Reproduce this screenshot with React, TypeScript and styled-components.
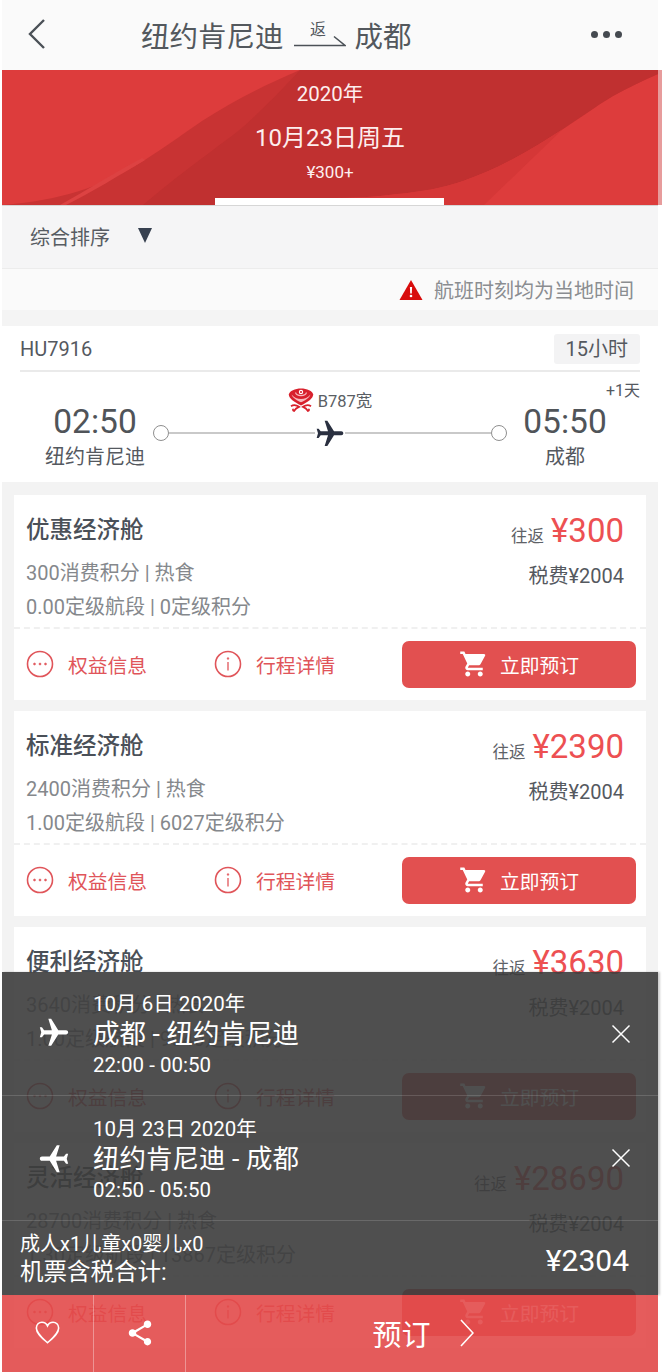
import React from "react";
import styled, { createGlobalStyle } from "styled-components";
import { MdFlight, MdShoppingCart, MdShare } from "react-icons/md";

const GlobalStyle = createGlobalStyle`
  html, body {
    margin: 0;
    padding: 0;
    background: #ffffff;
  }
  body {
    font-family: Roboto, "Noto Sans CJK SC", sans-serif;
  }
`;

const cabins = [
  { name: "优惠经济舱", price: "¥300", points: "300消费积分 | 热食", level: "0.00定级航段 | 0定级积分" },
  { name: "标准经济舱", price: "¥2390", points: "2400消费积分 | 热食", level: "1.00定级航段 | 6027定级积分" },
  { name: "便利经济舱", price: "¥3630", points: "3640消费积分 | 热食", level: "1.00定级航段 | 9040定级积分" },
  { name: "灵活经济舱", price: "¥28690", points: "28700消费积分 | 热食", level: "1.30定级航段 | 13867定级积分" },
];

const trips = [
  { date: "10月 6日 2020年", route: "成都 - 纽约肯尼迪", time: "22:00 - 00:50", back: false },
  { date: "10月 23日 2020年", route: "纽约肯尼迪 - 成都", time: "02:50 - 05:50", back: true },
];

const HainanLogo = () => (
  <svg width="26" height="24" viewBox="0 0 26 24" fill="none">
    <path d="M13 0.500C7 0.500 1.500 3 0.800 6.500C1 10.500 6 14 13 17.500C20 14 25 10.500 25.200 6.500C24.500 3 19 0.500 13 0.500Z" fill="#d8202c" />
    <path d="M3.500 6.500C5 10.500 9.500 12.800 13 14.200C16.500 12.800 21 10.500 22.500 6.500C20 9.800 16.500 11 13 11C9.500 11 6 9.800 3.500 6.500Z" fill="#f7b9bd" />
    <path d="M7.500 4.500C8.500 8.600 17.500 8.600 18.500 4.500" stroke="#f7b9bd" strokeWidth="1.100" />
    <circle cx="13" cy="4" r="2.200" fill="#ffffff" />
    <circle cx="13" cy="4" r="1.100" fill="#d8202c" />
    <path d="M3 18.200C5.500 16.500 8.500 17 11 18.800C8.800 19.600 7.200 21 6 23C5 22.600 4.500 21.500 5.600 21" stroke="#d8202c" strokeWidth="1.800" />
    <path d="M23 18.200C20.500 16.500 17.500 17 15 18.800C17.200 19.600 18.800 21 20 23C21 22.600 21.500 21.500 20.400 21" stroke="#d8202c" strokeWidth="1.800" />
  </svg>
);

const MoreIcon = () => (
  <svg width="28" height="28" viewBox="0 0 28 28" fill="none" stroke="#e0555a" strokeWidth="1.600">
    <circle cx="14" cy="14" r="12.500" />
    <circle cx="8.500" cy="14" r="1" fill="#e0555a" strokeWidth="0.600" />
    <circle cx="14" cy="14" r="1" fill="#e0555a" strokeWidth="0.600" />
    <circle cx="19.500" cy="14" r="1" fill="#e0555a" strokeWidth="0.600" />
  </svg>
);

const InfoIcon = () => (
  <svg width="28" height="28" viewBox="0 0 28 28" fill="none" stroke="#e0555a" strokeWidth="1.600">
    <circle cx="14" cy="14" r="12.500" />
    <circle cx="14" cy="8.500" r="0.900" fill="#e0555a" strokeWidth="0.400" />
    <path d="M14 12V20.500" strokeWidth="1.300" />
  </svg>
);

const App = () => (
  <Page>
    <GlobalStyle />
    <Header>
      <BackButton>
        <svg width="20" height="32" viewBox="0 0 20 32" fill="none" stroke="#4b5157" strokeWidth="2.400">
          <path d="M17 2L3 16L17 30" />
        </svg>
      </BackButton>
      <RouteTitle>
        <span>纽约肯尼迪</span>
        <ReturnMark>
          <ReturnLabel>返</ReturnLabel>
          <ReturnArrow width="52" height="14" viewBox="0 0 52 14" fill="none" stroke="#4b5157" strokeWidth="1.600">
            <path d="M0 12.500H51L40 3.500" />
          </ReturnArrow>
        </ReturnMark>
        <span>成都</span>
      </RouteTitle>
      <MoreDots>
        <Dot />
        <Dot />
        <Dot />
      </MoreDots>
    </Header>

    <DateTab>
      <Swoosh viewBox="0 0 656 135" preserveAspectRatio="none">
        <path d="M0 135C25 133 45 130 67 124C90 118 112 108 133 96C155 83 178 66 200 51C232 30 265 14 298 0H656V4C640 11 625 18 611 26C594 36 578 48 561 59C544 70 528 80 511 89C494 98 478 105 461 111C440 118 418 122 395 124C372 127 350 128 328 128V135Z" fill="#c83333" />
        <path d="M141 135C170 110 200 88 231 65C250 50 275 25 298 0H656V4C640 11 625 18 611 26C594 36 578 48 561 59C544 70 528 80 511 89C494 98 478 105 461 111C440 118 418 122 395 124C372 127 350 128 328 128V135Z" fill="#c03030" />
        <path d="M58 135C85 120 112 103 140 88L143 90C116 106 90 122 64 135Z" fill="#dd4242" />
        <path d="M328 128C350 128 372 127 395 124C418 122 440 118 461 111C478 105 494 98 511 89C528 80 544 70 561 59L482 135H328Z" fill="#d53737" />
      </Swoosh>
      <TabYear>2020年</TabYear>
      <TabDate>10月23日周五</TabDate>
      <TabPrice>¥300+</TabPrice>
      <TabActiveBar />
    </DateTab>

    <SortRow>
      <span>综合排序</span>
      <SortArrow />
    </SortRow>

    <NoticeRow>
      <svg width="24" height="22" viewBox="0 0 24 22">
        <path d="M12 1L23.500 21H0.500Z" fill="#d80c0c" />
        <path d="M10.900 8H13.100L12.800 14.500H11.200Z" fill="#ffffff" />
        <circle cx="12" cy="17" r="1.300" fill="#ffffff" />
      </svg>
      <span>航班时刻均为当地时间</span>
    </NoticeRow>

    <FlightCard>
      <FlightTop>
        <span>HU7916</span>
        <Duration>15小时</Duration>
      </FlightTop>
      <FlightBody>
        <Endpoint>
          <Clock>02:50</Clock>
          <City>纽约肯尼迪</City>
        </Endpoint>
        <Track>
          <PlaneModel>
            <HainanLogo />
            <span>B787宽</span>
          </PlaneModel>
          <TrackLine>
            <Ring />
            <Rail />
            <TrackPlane><MdFlight size={32} /></TrackPlane>
            <Rail />
            <Ring />
          </TrackLine>
        </Track>
        <Endpoint>
          <Clock>05:50</Clock>
          <City>成都</City>
        </Endpoint>
        <NextDay>+1天</NextDay>
      </FlightBody>
    </FlightCard>

    <CabinList>
      {cabins.map((c) => (
        <CabinCard key={c.name}>
          <CabinInfo>
            <CabinLeft>
              <CabinName>{c.name}</CabinName>
              <CabinMeta>{c.points}</CabinMeta>
              <CabinMeta>{c.level}</CabinMeta>
            </CabinLeft>
            <CabinRight>
              <PriceLine>
                <TripType>往返</TripType>
                <Price>{c.price}</Price>
              </PriceLine>
              <Tax>税费¥2004</Tax>
            </CabinRight>
          </CabinInfo>
          <CabinActions>
            <ActionLink>
              <MoreIcon />
              <span>权益信息</span>
            </ActionLink>
            <ActionLink>
              <InfoIcon />
              <span>行程详情</span>
            </ActionLink>
            <BookButton>
              <MdShoppingCart size={30} />
              <span>立即预订</span>
            </BookButton>
          </CabinActions>
        </CabinCard>
      ))}
    </CabinList>

    <BottomSheet>
      <Summary>
        {trips.map((t) => (
          <TripRow key={t.date}>
            <TripPlane $back={t.back}><MdFlight size={34} /></TripPlane>
            <TripText>
              <TripDate>{t.date}</TripDate>
              <TripRoute>{t.route}</TripRoute>
              <TripTime>{t.time}</TripTime>
            </TripText>
            <svg width="20" height="20" viewBox="0 0 20 20" stroke="#ffffff" strokeWidth="1.500" fill="none">
              <path d="M1.500 1.500L18.500 18.500M18.500 1.500L1.500 18.500" />
            </svg>
          </TripRow>
        ))}
        <TotalRow>
          <div>
            <PassengerCount>成人x1儿童x0婴儿x0</PassengerCount>
            <TotalLabel>机票含税合计:</TotalLabel>
          </div>
          <TotalPrice>¥2304</TotalPrice>
        </TotalRow>
      </Summary>
      <ActionBar>
        <IconCell>
          <svg width="25" height="25" viewBox="0 0 28 26" fill="none" stroke="#ffffff" strokeWidth="1.800">
            <path d="M14 24.500C8 19 1.500 14 1.500 8C1.500 4 4.500 1.500 7.800 1.500C10.500 1.500 12.800 3 14 5.500C15.200 3 17.500 1.500 20.200 1.500C23.500 1.500 26.500 4 26.500 8C26.500 14 20 19 14 24.500Z" />
          </svg>
        </IconCell>
        <IconCell>
          <MdShare size={30} color="#ffffff" />
        </IconCell>
        <ReserveCell>
          <span>预订</span>
          <svg width="14" height="28" viewBox="0 0 14 28" fill="none" stroke="#ffffff" strokeWidth="1.600">
            <path d="M1 1L13 14L1 27" />
          </svg>
        </ReserveCell>
      </ActionBar>
    </BottomSheet>
  </Page>
);

const Page = styled.div`
  position: relative;
  width: 662px;
  height: 1372px;
  overflow: hidden;
  box-sizing: border-box;
  padding: 0 4px 0 2px;
  background: #ffffff;
  color: #4b5157;
`;

const Header = styled.div`
  display: flex;
  align-items: center;
  height: 70px;
  padding: 0 36px 0 25px;
  background: #fafafa;
`;

const BackButton = styled.div`
  display: flex;
  width: 114px;
  margin-top: -2px;
`;

const RouteTitle = styled.div`
  display: flex;
  align-items: center;
  flex: 1;
  gap: 9px;
  margin-top: 6px;
  font-size: 28.500px;
  line-height: 36px;
  color: #53585d;
`;

const ReturnMark = styled.div`
  display: flex;
  flex-direction: column;
  align-items: center;
  height: 30px;
  margin: -5px 0 0 1px;
`;

const ReturnLabel = styled.span`
  font-size: 16px;
  line-height: 18px;
  margin-right: 3px;
`;

const ReturnArrow = styled.svg`
  flex: none;
  margin-top: -6px;
`;

const MoreDots = styled.div`
  display: flex;
  gap: 5px;
  margin-top: -2px;
`;

const Dot = styled.i`
  display: block;
  width: 7px;
  height: 7px;
  border-radius: 50%;
  background: #454a50;
`;

const DateTab = styled.div`
  position: relative;
  display: flex;
  flex-direction: column;
  align-items: center;
  height: 135px;
  background: #dd3c3c;
  box-shadow: 4px 0 0 #e79c9c, 0 1px 0 #d6d6d6;
  color: #fdeeee;
`;

const Swoosh = styled.svg`
  position: absolute;
  inset: 0;
  width: 100%;
  height: 100%;
`;

const TabYear = styled.div`
  position: relative;
  margin-top: 11px;
  font-size: 20.500px;
  line-height: 26px;
`;

const TabDate = styled.div`
  position: relative;
  margin-top: 16px;
  font-size: 24px;
  line-height: 30px;
`;

const TabPrice = styled.div`
  position: relative;
  margin-top: 8px;
  font-size: 17px;
  line-height: 22px;
`;

const TabActiveBar = styled.div`
  position: absolute;
  bottom: 0;
  left: 213px;
  width: 229px;
  height: 7px;
  background: #ffffff;
`;

const SortRow = styled.div`
  display: flex;
  align-items: center;
  gap: 28px;
  height: 63px;
  padding-left: 28px;
  background: #f5f5f6;
  border-bottom: 1px solid #ececec;
  font-size: 20px;
  color: #575c62;
`;

const SortArrow = styled.i`
  display: block;
  width: 0;
  height: 0;
  margin-top: -3px;
  border-left: 7px solid transparent;
  border-right: 7px solid transparent;
  border-top: 15px solid #374150;
`;

const NoticeRow = styled.div`
  display: flex;
  align-items: center;
  justify-content: flex-end;
  gap: 11px;
  height: 41px;
  padding-right: 24px;
  background: #fafafa;
  font-size: 20px;
  color: #8a8d91;
`;

const FlightCard = styled.div`
  height: 172px;
  box-sizing: border-box;
  padding: 8px 18px 0 18px;
  border-top: 16px solid #f4f4f4;
  background: #ffffff;
`;

const FlightTop = styled.div`
  display: flex;
  align-items: center;
  justify-content: space-between;
  height: 30px;
  padding-bottom: 6px;
  border-bottom: 2px solid #eaeaea;
  font-size: 20px;
  color: #55595f;
`;

const Duration = styled.span`
  padding: 0 12px;
  border-radius: 3px;
  background: #f3f3f4;
  font-size: 20px;
  line-height: 30px;
`;

const FlightBody = styled.div`
  position: relative;
  display: flex;
  padding: 30px 25px 0 25px;
`;

const Endpoint = styled.div`
  display: flex;
  flex-direction: column;
  align-items: center;
  width: 100px;
  flex: none;
`;

const Clock = styled.div`
  font-size: 33.500px;
  line-height: 40px;
  color: #505459;
`;

const City = styled.div`
  font-size: 20px;
  line-height: 30px;
  color: #55595f;
`;

const Track = styled.div`
  flex: 1;
  margin: -13px 8px 0 8px;
`;

const PlaneModel = styled.div`
  display: flex;
  align-items: center;
  justify-content: center;
  gap: 4px;
  height: 26px;
  margin: -2px 0 2px;
  font-size: 16.500px;
  color: #5a5e64;
`;

const TrackLine = styled.div`
  display: flex;
  align-items: center;
  height: 36px;
`;

const Ring = styled.i`
  display: block;
  flex: none;
  box-sizing: border-box;
  width: 16px;
  height: 16px;
  border: 1.500px solid #8f8f8f;
  border-radius: 50%;
  background: #ffffff;
`;

const Rail = styled.i`
  display: block;
  flex: 1;
  height: 2px;
  background: #c9c9c9;
`;

const TrackPlane = styled.span`
  display: flex;
  margin: 2px -1px 0;
  color: #2a3040;
  transform: rotate(90deg);
`;

const NextDay = styled.span`
  position: absolute;
  top: 5px;
  right: 0;
  font-size: 16px;
  color: #55595f;
`;

const CabinList = styled.div`
  display: flex;
  flex-direction: column;
  gap: 11px;
  padding: 13px 12px 24px;
  background: #f3f3f3;
`;

const CabinCard = styled.div`
  height: 205px;
  background: #ffffff;
`;

const CabinInfo = styled.div`
  display: flex;
  justify-content: space-between;
  box-sizing: border-box;
  height: 134px;
  padding: 17px 22px 0 12px;
  border-bottom: 2px dashed #f0f0f0;
`;

const CabinLeft = styled.div`
  display: flex;
  flex-direction: column;
`;

const CabinName = styled.div`
  margin-bottom: 10px;
  font-size: 23.500px;
  font-weight: 500;
  line-height: 36px;
  color: #4a5058;
`;

const CabinMeta = styled.div`
  font-size: 20px;
  line-height: 30px;
  margin-bottom: 4px;
  color: #85888c;
`;

const CabinRight = styled.div`
  display: flex;
  flex-direction: column;
  align-items: flex-end;
`;

const PriceLine = styled.div`
  display: flex;
  align-items: baseline;
  gap: 7px;
  height: 38px;
  margin-bottom: 12px;
`;

const TripType = styled.span`
  font-size: 16.500px;
  color: #5e6267;
`;

const Price = styled.span`
  font-size: 33px;
  line-height: 38px;
  color: #ed5052;
`;

const Tax = styled.div`
  font-size: 20px;
  line-height: 28px;
  color: #55595f;
`;

const CabinActions = styled.div`
  display: flex;
  align-items: center;
  box-sizing: border-box;
  height: 69px;
  padding: 1px 10px 0 12px;
`;

const ActionLink = styled.div`
  display: flex;
  align-items: center;
  gap: 14px;
  width: 188px;
  font-size: 19.800px;
  color: #e0555a;
`;

const BookButton = styled.div`
  display: flex;
  flex: 1;
  align-items: center;
  justify-content: center;
  gap: 11px;
  height: 47px;
  border-radius: 7px;
  background: #e25050;
  color: #ffffff;
  font-size: 19.800px;
`;

const BottomSheet = styled.div`
  position: absolute;
  top: 972px;
  left: 2px;
  right: 4px;
  bottom: 0;
  display: flex;
  flex-direction: column;
`;

const Summary = styled.div`
  height: 323px;
  flex: none;
  background: rgba(60, 60, 60, 0.9);
  box-shadow: 2px 0 2px rgba(0, 0, 0, 0.2);
  color: #ffffff;
`;

const TripRow = styled.div`
  display: flex;
  align-items: center;
  box-sizing: border-box;
  height: 125px;
  padding: 0 27px 0 35px;
  border-bottom: 1px solid rgba(255, 255, 255, 0.15);
  &:first-child {
    height: 124px;
  }
`;

const TripPlane = styled.span<{ $back: boolean }>`
  display: flex;
  width: 56px;
  margin-top: -1px;
  transform: rotate(${(p) => (p.$back ? -90 : 90)}deg);
  transform-origin: 17px 17px;
`;

const TripText = styled.div`
  flex: 1;
`;

const TripDate = styled.div`
  margin-bottom: -4px;
  font-size: 20.500px;
  line-height: 35px;
`;

const TripRoute = styled.div`
  margin-bottom: 1px;
  font-size: 26.500px;
  line-height: 31px;
`;

const TripTime = styled.div`
  margin-bottom: -1px;
  font-size: 20.500px;
  line-height: 31px;
`;

const TotalRow = styled.div`
  display: flex;
  align-items: center;
  justify-content: space-between;
  padding: 9px 29px 0 18px;
`;

const PassengerCount = styled.div`
  font-size: 20px;
  line-height: 28px;
`;

const TotalLabel = styled.div`
  font-size: 23.500px;
  line-height: 29px;
`;

const TotalPrice = styled.div`
  margin-top: 4px;
  font-size: 30px;
  line-height: 36px;
`;

const ActionBar = styled.div`
  display: flex;
  flex: 1;
  background: rgba(226, 74, 74, 0.9);
  color: #ffffff;
`;

const IconCell = styled.div`
  display: flex;
  align-items: center;
  justify-content: center;
  width: 92px;
  height: 77px;
  padding-bottom: 2px;
  box-sizing: border-box;
  border-right: 1px solid rgba(255, 255, 255, 0.35);
`;

const ReserveCell = styled.div`
  display: flex;
  flex: 1;
  align-items: center;
  justify-content: center;
  gap: 29px;
  padding-bottom: 2px;
  margin-left: 2px;
  font-size: 29px;
`;

export default App;
